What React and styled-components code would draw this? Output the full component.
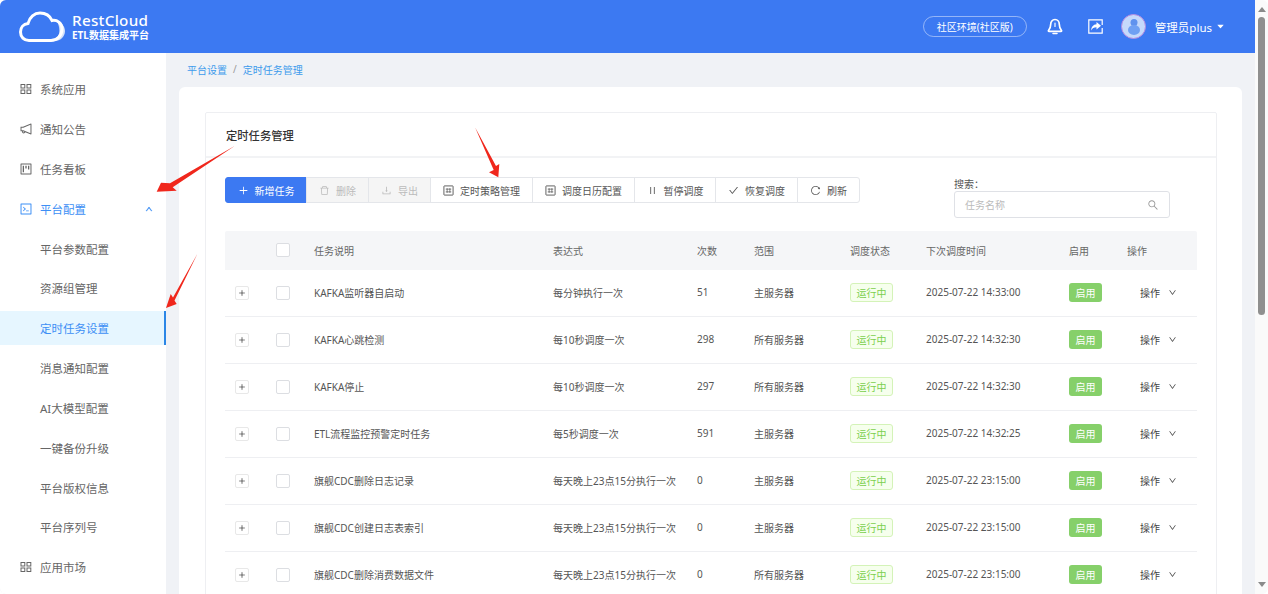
import React from 'react';
import styled, { createGlobalStyle } from 'styled-components';
import {
  AiOutlineNotification,
  AiOutlineProject,
  AiOutlineCode,
  AiOutlineUp,
  AiOutlineDown,
  AiOutlinePlus,
  AiOutlineDelete,
  AiOutlineDownload,
  AiOutlinePause,
  AiOutlineCheck,
  AiOutlineReload,
  AiOutlineSearch,
  AiFillCaretDown,
} from 'react-icons/ai';

const GlobalStyle = createGlobalStyle`
  html, body {
    margin: 0;
    height: 100%;
    overflow: hidden;
    background: #fff;
    font-family: "Noto Sans", "Noto Sans CJK SC", sans-serif;
  }
  * { box-sizing: border-box; }
`;

const Window = styled.div`
  position: relative;
  display: flex;
  width: 1268px;
  height: 594px;
  overflow: hidden;
  border-radius: 6px;
`;

const Page = styled.div`
  flex: 1;
  min-width: 0;
  display: flex;
  flex-direction: column;
  background: #f0f2f6;
`;

const Header = styled.header`
  flex: none;
  height: 53px;
  display: flex;
  align-items: center;
  justify-content: space-between;
  padding: 0 30px 0 19px;
  background: #3c79f2;
  color: #fff;
`;

const Logo = styled.div`
  display: flex;
  align-items: center;
  gap: 5px;
`;

const LogoText = styled.div`
  display: flex;
  flex-direction: column;
  line-height: 1;
`;

const LogoName = styled.span`
  font-size: 15.2px;
  font-weight: 500;
  letter-spacing: 0.3px;
`;

const LogoSub = styled.span`
  margin-top: 1px;
  font-size: 10px;
  font-weight: 700;
`;

const HeaderRight = styled.div`
  display: flex;
  align-items: center;
`;

const EnvPill = styled.div`
  width: 104px;
  height: 21px;
  display: flex;
  align-items: center;
  justify-content: center;
  margin-right: 20px;
  border: 1px solid rgba(255, 255, 255, 0.45);
  border-radius: 11px;
  font-size: 10px;
`;

const HeaderIcon = styled.div`
  width: 16px;
  display: flex;
  justify-content: center;
  margin-right: 25px;
`;

const Avatar = styled.div`
  width: 25px;
  height: 25px;
  margin-left: -8px;
  margin-right: 9px;
`;

const UserName = styled.span`
  font-size: 11.5px;
  margin-right: 4px;
`;

const Body = styled.div`
  flex: 1;
  min-height: 0;
  display: flex;
`;

const Sidebar = styled.nav`
  flex: none;
  width: 166px;
  display: flex;
  flex-direction: column;
  gap: 5.83px;
  padding-top: 19.3px;
  background: #fff;
`;

const MenuItem = styled.div`
  flex: none;
  height: 34px;
  display: flex;
  align-items: center;
  padding-left: ${({ $sub }) => ($sub ? '40px' : '19px')};
  padding-right: 13px;
  font-size: 11.5px;
  color: ${({ $open, $active }) => ($open || $active ? '#3d8ff5' : '#666')};
  background: ${({ $active }) => ($active ? '#e6f6ff' : 'transparent')};
  border-right: ${({ $active }) => ($active ? '2px solid #2b86e6' : 'none')};

  & > svg:first-child {
    font-size: 14px;
    margin-right: 7px;
  }

  & > svg:last-child:not(:first-child) {
    margin: 0 0 0 auto;
    font-size: 8px;
    stroke: currentColor;
    stroke-width: 50;
  }
`;

const Main = styled.main`
  flex: 1;
  min-width: 0;
  padding: 0 13px;
`;

const Breadcrumb = styled.div`
  height: 34px;
  display: flex;
  align-items: center;
  gap: 6px;
  padding: 0 0 2px 8px;
  font-size: 10px;
  color: #3d9bec;
`;

const Slash = styled.span`
  color: #999;
`;

const Panel = styled.section`
  height: 600px;
  padding: 25px 25px 0 26px;
  background: #fff;
  border-radius: 6px 6px 0 0;
`;

const Card = styled.div`
  height: 600px;
  border: 1px solid #eeeff2;
  border-radius: 2px;
`;

const CardTitle = styled.div`
  height: 45px;
  display: flex;
  align-items: center;
  padding-left: 20px;
  border-bottom: 2px solid #f2f3f5;
  font-size: 11.3px;
  font-weight: 500;
  color: #333;
`;

const CardBody = styled.div`
  padding: 19px 19px 0;
`;

const ToolRow = styled.div`
  height: 54px;
  display: flex;
  align-items: flex-start;
`;

const ButtonGroup = styled.div`
  display: flex;
  height: 26px;
`;

const ToolButton = styled.div`
  height: 26px;
  display: flex;
  align-items: center;
  gap: 6px;
  padding: 0 ${({ $narrow }) => ($narrow ? '11.5px' : '12px')};
  margin-left: -1px;
  border: 1px solid ${({ $primary }) => ($primary ? '#3c79f2' : '#e4e6ea')};
  font-size: 10px;
  white-space: nowrap;
  color: ${({ $primary, $disabled }) => ($primary ? '#fff' : $disabled ? '#bbb' : '#555')};
  background: ${({ $primary, $disabled }) => ($primary ? '#3c79f2' : $disabled ? '#f5f5f5' : '#fff')};

  &:first-child {
    margin-left: 0;
    border-radius: 3px 0 0 3px;
  }

  &:last-child {
    border-radius: 0 3px 3px 0;
  }

  svg {
    flex: none;
    font-size: 11px;
  }
`;

const SearchBox = styled.div`
  width: 216px;
  margin-left: 94px;
`;

const SearchLabel = styled.div`
  height: 14px;
  font-size: 10px;
  line-height: 14px;
  color: #555;
`;

const SearchInput = styled.div`
  height: 27px;
  display: flex;
  align-items: center;
  justify-content: space-between;
  padding: 0 10px;
  border: 1px solid #dfe1e6;
  border-radius: 3px;
  font-size: 10px;
  color: #bbb;

  svg {
    font-size: 12px;
    color: #999;
  }
`;

const COLUMNS = '51px 38px 239px 144px 57px 96px 76px 143px 58px 70px';

const HeadRow = styled.div`
  height: 39px;
  padding-bottom: 1px;
  display: grid;
  grid-template-columns: ${COLUMNS};
  align-items: center;
  background: #f5f6f8;
  font-size: 10px;
  color: #666;
  border-radius: 2px 2px 0 0;
`;

const Row = styled.div`
  height: 47px;
  padding-bottom: 2px;
  display: grid;
  grid-template-columns: ${COLUMNS};
  align-items: center;
  border-bottom: 1px solid #eeeff2;
  font-size: 10px;
  color: #555;
`;

const Expand = styled.div`
  width: 14px;
  height: 14px;
  margin: 2px 0 0 10px;
  display: flex;
  align-items: center;
  justify-content: center;
  border: 1px solid #e8e8e8;
  border-radius: 2px;
  color: #333;
  font-size: 8px;

  svg {
    stroke: currentColor;
    stroke-width: 10;
  }
`;

const Check = styled.div`
  width: 14px;
  height: 14px;
  border: 1px solid #dcdee2;
  border-radius: 2px;
  background: #fff;
`;

const RowCheck = styled(Check)`
  margin-top: 2px;
`;

const RunTag = styled.span`
  display: inline-flex;
  align-items: center;
  justify-content: center;
  width: 43px;
  height: 19px;
  border: 1px solid #d4f3b8;
  border-radius: 3px;
  background: #f6ffed;
  color: #7ccf4e;
  font-size: 10px;
`;

const OnTag = styled.span`
  display: inline-flex;
  align-items: center;
  justify-content: center;
  width: 33px;
  height: 19px;
  border-radius: 3px;
  background: #86d06a;
  color: #fff;
  font-size: 10px;
`;

const ActionCell = styled.div`
  display: flex;
  align-items: center;
  gap: 8px;
  padding-left: 13px;
  color: #444;

  svg {
    font-size: 9px;
  }
`;

const Scrollbar = styled.div`
  flex: none;
  width: 13px;
  display: flex;
  flex-direction: column;
  align-items: center;
  background: #fafafa;
`;

const ScrollArrow = styled.div`
  width: 0;
  height: 0;
  margin: ${({ $down }) => ($down ? 'auto 0 7px' : '7px 0 5px')};
  border-left: 4px solid transparent;
  border-right: 4px solid transparent;
  border-bottom: ${({ $down }) => ($down ? 'none' : '5px solid #8a8a8a')};
  border-top: ${({ $down }) => ($down ? '5px solid #8a8a8a' : 'none')};
`;

const ScrollThumb = styled.div`
  width: 7px;
  height: 298px;
  background: #8f8f8f;
  border-radius: 4px;
`;

const Arrow = styled.svg`
  position: absolute;
  left: ${({ $x }) => $x}px;
  top: ${({ $y }) => $y}px;
  pointer-events: none;
`;

const AppIcon = () => (
  <svg viewBox="0 0 14 14" width="14" height="14" fill="none" stroke="currentColor" strokeWidth="1">
    <rect x="2" y="2.500" width="3.800" height="3.500" />
    <rect x="8" y="2.500" width="3.800" height="3.500" />
    <rect x="2" y="8" width="3.800" height="3.500" />
    <rect x="8" y="8" width="3.800" height="3.500" />
  </svg>
);

const Plan = () => (
  <svg viewBox="0 0 12 12" width="11" height="11" fill="none" stroke="currentColor" strokeWidth="1">
    <rect x="1" y="1" width="10" height="10" rx="0.5" />
    <path d="M3 4.500h6M3 7.500h6M4.500 3.500v5M7.500 3.500v5" strokeWidth="0.8" />
  </svg>
);

const CloudLogo = () => (
  <svg width="48" height="32" viewBox="0 0 48 32" fill="none">
    <path d="M38 10c4 1 8 5 8 10 0 6-5 10-10 10H26c7 0 12-2 14-7 1-4 0-9-2-13z" fill="#d6e3fb" />
    <path
      d="M10 29.500C5 29.500 1.500 26 1.500 21c0-4.500 3-8 7.500-8.500C10.500 6 15.500 2 21 2c6 0 10 3 12 7.500 5-1 10 2.500 10 8.500 0 6.500-5 11.500-11 11.500z"
      stroke="#fff"
      strokeWidth="3"
    />
  </svg>
);

const BellIcon = () => (
  <svg width="16" height="17" viewBox="0 0 16 17" fill="none" stroke="#fff">
    <path
      d="M8 1.500c-2.700 0-4.300 2.200-4.300 4.800 0 3-.7 4.700-2.200 6.200-.3.400 0 .9.500.9h12c.5 0 .8-.5.500-.9-1.500-1.500-2.200-3.200-2.200-6.200 0-2.600-1.600-4.800-4.300-4.800z"
      strokeWidth="1.700"
    />
    <path d="M6 15.500h4" strokeWidth="1.500" strokeLinecap="round" />
    <path d="M8 5v3.500" strokeWidth="1.200" strokeLinecap="round" />
  </svg>
);

const ShareIcon = () => (
  <svg width="15" height="15" viewBox="0 0 15 15" fill="none">
    <path d="M6 .8H.8v13.400h13.400V9" stroke="#fff" strokeWidth="1.200" />
    <path d="M6 .8h8.200V6" stroke="#fff" strokeWidth="1.200" />
    <path d="M8.500 3l4.500 3.700-4.500 3.700V8.300C6 8.300 4.300 9.300 3 11.500c.3-3.500 2.200-6 5.500-6.300z" fill="#fff" />
  </svg>
);

const UserAvatar = () => (
  <svg width="25" height="25" viewBox="0 0 25 25">
    <circle cx="12.500" cy="12.500" r="12" fill="#c5d9fb" stroke="#b48ae0" strokeWidth="1" />
    <circle cx="13" cy="8.500" r="3.500" fill="#5f92ee" />
    <ellipse cx="13" cy="16" rx="6" ry="5" fill="#6fa0f3" />
  </svg>
);

const menu = [
  { label: '系统应用', Icon: AppIcon },
  { label: '通知公告', Icon: AiOutlineNotification },
  { label: '任务看板', Icon: AiOutlineProject },
  { label: '平台配置', Icon: AiOutlineCode, open: true },
  { label: '平台参数配置', sub: true },
  { label: '资源组管理', sub: true },
  { label: '定时任务设置', sub: true, active: true },
  { label: '消息通知配置', sub: true },
  { label: 'AI大模型配置', sub: true },
  { label: '一键备份升级', sub: true },
  { label: '平台版权信息', sub: true },
  { label: '平台序列号', sub: true },
  { label: '应用市场', Icon: AppIcon },
];

const tools = [
  { label: '新增任务', Icon: AiOutlinePlus, primary: true, narrow: true },
  { label: '删除', Icon: AiOutlineDelete, disabled: true },
  { label: '导出', Icon: AiOutlineDownload, disabled: true },
  { label: '定时策略管理', Icon: Plan },
  { label: '调度日历配置', Icon: Plan },
  { label: '暂停调度', Icon: AiOutlinePause, narrow: true },
  { label: '恢复调度', Icon: AiOutlineCheck },
  { label: '刷新', Icon: AiOutlineReload },
];

const heads = ['任务说明', '表达式', '次数', '范围', '调度状态', '下次调度时间', '启用', '操作'];

const rows = [
  ['KAFKA监听器自启动', '每分钟执行一次', '51', '主服务器', '2025-07-22 14:33:00'],
  ['KAFKA心跳检测', '每10秒调度一次', '298', '所有服务器', '2025-07-22 14:32:30'],
  ['KAFKA停止', '每10秒调度一次', '297', '所有服务器', '2025-07-22 14:32:30'],
  ['ETL流程监控预警定时任务', '每5秒调度一次', '591', '主服务器', '2025-07-22 14:32:25'],
  ['旗舰CDC删除日志记录', '每天晚上23点15分执行一次', '0', '主服务器', '2025-07-22 23:15:00'],
  ['旗舰CDC创建日志表索引', '每天晚上23点15分执行一次', '0', '主服务器', '2025-07-22 23:15:00'],
  ['旗舰CDC删除消费数据文件', '每天晚上23点15分执行一次', '0', '所有服务器', '2025-07-22 23:15:00'],
];

const App = () => (
  <Window>
    <GlobalStyle />
    <Page>
      <Header>
        <Logo>
          <CloudLogo />
          <LogoText>
            <LogoName>RestCloud</LogoName>
            <LogoSub>ETL数据集成平台</LogoSub>
          </LogoText>
        </Logo>
        <HeaderRight>
          <EnvPill>社区环境(社区版)</EnvPill>
          <HeaderIcon>
            <BellIcon />
          </HeaderIcon>
          <HeaderIcon>
            <ShareIcon />
          </HeaderIcon>
          <Avatar>
            <UserAvatar />
          </Avatar>
          <UserName>管理员plus</UserName>
          <AiFillCaretDown size={9} />
        </HeaderRight>
      </Header>
      <Body>
        <Sidebar>
          {menu.map(({ label, Icon, sub, open, active }) => (
            <MenuItem key={label} $sub={sub} $open={open} $active={active}>
              {Icon && <Icon />}
              {label}
              {open && <AiOutlineUp />}
            </MenuItem>
          ))}
        </Sidebar>
        <Main>
          <Breadcrumb>
            平台设置 <Slash>/</Slash> 定时任务管理
          </Breadcrumb>
          <Panel>
            <Card>
              <CardTitle>定时任务管理</CardTitle>
              <CardBody>
                <ToolRow>
                  <ButtonGroup>
                    {tools.map(({ label, Icon, primary, disabled, narrow }) => (
                      <ToolButton key={label} $primary={primary} $disabled={disabled} $narrow={narrow}>
                        <Icon />
                        {label}
                      </ToolButton>
                    ))}
                  </ButtonGroup>
                  <SearchBox>
                    <SearchLabel>搜索：</SearchLabel>
                    <SearchInput>
                      任务名称
                      <AiOutlineSearch />
                    </SearchInput>
                  </SearchBox>
                </ToolRow>
                <HeadRow>
                  <span />
                  <Check />
                  {heads.map((h) => (
                    <span key={h}>{h}</span>
                  ))}
                </HeadRow>
                {rows.map(([name, expr, count, scope, next]) => (
                  <Row key={name}>
                    <Expand>
                      <AiOutlinePlus />
                    </Expand>
                    <RowCheck />
                    <span>{name}</span>
                    <span>{expr}</span>
                    <span>{count}</span>
                    <span>{scope}</span>
                    <div>
                      <RunTag>运行中</RunTag>
                    </div>
                    <span>{next}</span>
                    <div>
                      <OnTag>启用</OnTag>
                    </div>
                    <ActionCell>
                      操作
                      <AiOutlineDown />
                    </ActionCell>
                  </Row>
                ))}
              </CardBody>
            </Card>
          </Panel>
        </Main>
      </Body>
    </Page>
    <Scrollbar>
      <ScrollArrow />
      <ScrollThumb />
      <ScrollArrow $down />
    </Scrollbar>
    <Arrow $x={150} $y={140} width="90" height="60" viewBox="0 0 90 60">
      <path d="M85 5.700L20 43.300 11 42.700 6.700 51.700 26.700 50.700 22.700 47.300z" fill="#f0271c" />
    </Arrow>
    <Arrow $x={160} $y={250} width="40" height="65" viewBox="0 0 40 65">
      <path d="M37.700 3.300L13 47.500 10.700 44 6 58 16.700 54 14.500 50.500z" fill="#f0271c" />
    </Arrow>
    <Arrow $x={470} $y={124} width="35" height="56" viewBox="0 0 35 56">
      <path d="M5 3.300L23.700 46 19 48.300 28.300 53.300 29.300 40 26 42z" fill="#f0271c" />
    </Arrow>
  </Window>
);

export default App;
